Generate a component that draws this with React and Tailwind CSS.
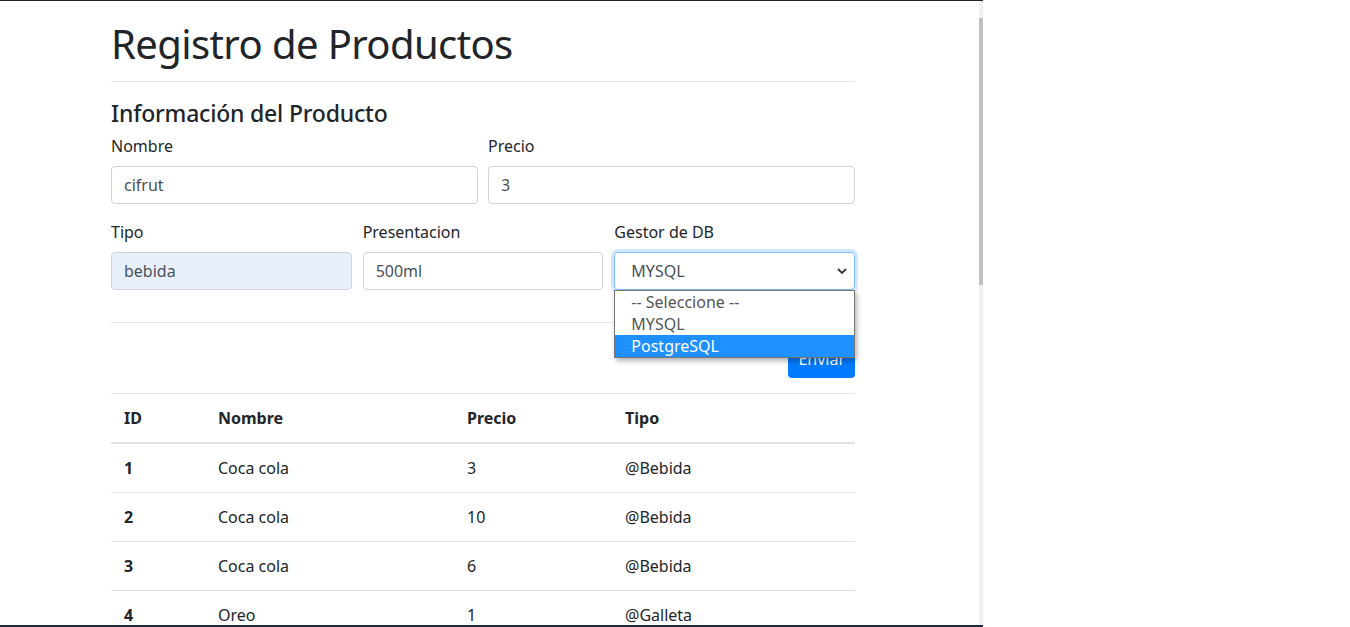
import React from "react";

const rows = [
  { id: 1, nombre: "Coca cola", precio: "3", tipo: "@Bebida" },
  { id: 2, nombre: "Coca cola", precio: "10", tipo: "@Bebida" },
  { id: 3, nombre: "Coca cola", precio: "6", tipo: "@Bebida" },
  { id: 4, nombre: "Oreo", precio: "1", tipo: "@Galleta" },
];

function Field({ label, value, className = "" }) {
  return (
    <div className="flex flex-col">
      <label className="h-6 leading-6 text-[16px] text-[#212529] mb-2">{label}</label>
      <div className={`h-[38px] rounded border border-[#ced4da] px-3 flex items-center text-[16px] text-[#495057] ${className}`}>
        {value}
      </div>
    </div>
  );
}

export default function App() {
  return (
    <div className="flex h-[627px] w-[1350px] overflow-hidden bg-white" style={{ fontFamily: '"Noto Sans", "Open Sans", sans-serif' }}>
      <div className="flex w-[983px] flex-col border-t border-b-2 border-t-[#222] border-b-[#1e293b]">
        <div className="flex flex-1 overflow-hidden">
          <div className="flex-1 overflow-hidden">
            <div className="ml-[111px] w-[744px] pt-[19px] text-[#212529]">
              <h1 className="h-12 text-[40px] leading-[48px] font-normal tracking-[-0.6px]">Registro de Productos</h1>
              <div className="mt-[13px] border-t border-[#e5e5e5]" />
              <h3 className="mt-[17px] h-[29px] text-[23px] leading-[29px] font-medium tracking-[-0.2px]">Información del Producto</h3>
              <div className="mt-[6px] grid grid-cols-2 gap-x-[10px]">
                <Field label="Nombre" value="cifrut" />
                <Field label="Precio" value="3" />
              </div>
              <div className="mt-4 grid grid-cols-3 gap-x-[11px]">
                <Field label="Tipo" value="bebida" className="bg-[#e8f0fe] text-[#212529]" />
                <Field label="Presentacion" value="500ml" />
                <div className="relative flex flex-col">
                  <label className="h-6 leading-6 text-[16px] mb-2">Gestor de DB</label>
                  <div className="h-[38px] rounded border border-[#80bdff] shadow-[0_0_0_3px_rgba(0,123,255,0.18)] pl-4 pr-[6px] flex items-center justify-between text-[16px] text-[#495057]">
                    <span>MYSQL</span>
                    <svg width="12" height="10" viewBox="0 0 12 10">
                      <path d="M2 3 L6 7 L10 3" fill="none" stroke="#333" strokeWidth="1.8" />
                    </svg>
                  </div>
                  <div className="absolute left-0 right-0 top-[70px] z-10 border border-[#767676] bg-white shadow-[2px_3px_5px_rgba(0,0,0,0.3)] text-[16px] leading-[22px]">
                    <div className="pl-4 text-[#555]">-- Seleccione --</div>
                    <div className="pl-4 text-[#555]">MYSQL</div>
                    <div className="pl-4 bg-[#1e90ff] text-white">PostgreSQL</div>
                  </div>
                </div>
              </div>
              <div className="mt-8 border-t border-[#e5e5e5]" />
              <div className="mt-[17px] flex justify-end">
                <button className="h-[38px] rounded bg-[#007bff] px-[10px] text-[16px] text-white">Enviar</button>
              </div>
              <div className="mt-[15px] border-t border-[#e5e5e5]" />
              <table className="w-full text-[16px]">
                <thead>
                  <tr className="h-[49px] border-b-2 border-[#dee2e6] text-left">
                    <th className="w-[95px] pl-[13px] font-bold">ID</th>
                    <th className="w-[249px] pl-3 font-bold">Nombre</th>
                    <th className="w-[158px] pl-3 font-bold">Precio</th>
                    <th className="pl-3 font-bold">Tipo</th>
                  </tr>
                </thead>
                <tbody>
                  {rows.map((r) => (
                    <tr key={r.id} className="h-[49px] border-b border-[#dee2e6]">
                      <td className="pl-[13px] font-bold">{r.id}</td>
                      <td className="pl-3">{r.nombre}</td>
                      <td className="pl-3">{r.precio}</td>
                      <td className="pl-3">{r.tipo}</td>
                    </tr>
                  ))}
                </tbody>
              </table>
            </div>
          </div>
          <div className="flex w-[4px] flex-col bg-[#f0f0f0]">
            <div className="h-[17px]" />
            <div className="h-[267px] bg-[#c1c1c1]" />
          </div>
        </div>
      </div>
      <div className="flex-1 bg-white" />
    </div>
  );
}
